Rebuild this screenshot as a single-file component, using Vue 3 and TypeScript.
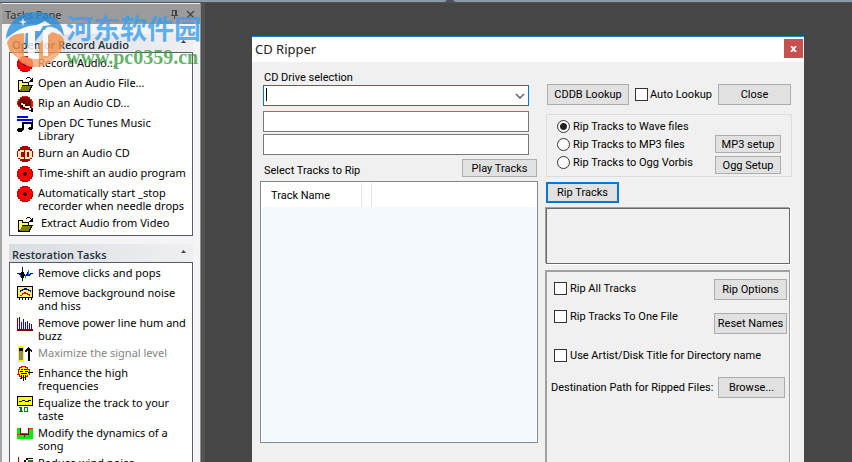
<script setup lang="ts">
import { ref } from 'vue'

type Task = { icon: string; label: string; disabled?: boolean }
type Section = { title: string; tasks: Task[] }

const sections: Section[] = [
  {
    title: 'Open or Record Audio',
    tasks: [
      { icon: 'record', label: 'Record Audio...' },
      { icon: 'folder', label: 'Open an Audio File...' },
      { icon: 'rip', label: 'Rip an Audio CD...' },
      { icon: 'notes', label: 'Open DC Tunes Music Library' },
      { icon: 'cd', label: 'Burn an Audio CD' },
      { icon: 'record', label: 'Time-shift an audio program' },
      { icon: 'record', label: 'Automatically start _stop recorder when needle drops' },
      { icon: 'folder', label: ' Extract Audio from Video' },
    ],
  },
  {
    title: 'Restoration Tasks',
    tasks: [
      { icon: 'click', label: 'Remove clicks and pops' },
      { icon: 'meter', label: 'Remove background noise and hiss' },
      { icon: 'bars', label: 'Remove power line hum and buzz' },
      { icon: 'level', label: 'Maximize the signal level', disabled: true },
      { icon: 'tube', label: 'Enhance the high frequencies' },
      { icon: 'eq', label: 'Equalize the track to your taste' },
      { icon: 'dynamics', label: 'Modify the dynamics of a song' },
      { icon: 'wind', label: 'Reduce wind noise' },
    ],
  },
]

const formats = [
  { value: 'wave', label: 'Rip Tracks to Wave files' },
  { value: 'mp3', label: 'Rip Tracks to MP3 files' },
  { value: 'ogg', label: 'Rip Tracks to Ogg Vorbis' },
]
const format = ref('wave')
const drive = ref('')
const artist = ref('')
const album = ref('')
const autoLookup = ref(false)
const ripAll = ref(false)
const oneFile = ref(false)
const useTitle = ref(false)
</script>

<template>
  <div class="app">
    <div class="frame-edge"><i></i></div>
    <div class="main">
      <aside class="pane">
        <header class="pane-head">
          <span>Tasks Pane</span>
          <button class="pane-btn" type="button" aria-label="Pin">
            <svg width="9" height="9" viewBox="0 0 9 9" shape-rendering="crispEdges">
              <path d="M2 0h5v5h1v1H5v3H4V6H1V5h1zM3 1v4h2V1z" fill="#444" fill-rule="evenodd" />
            </svg>
          </button>
          <button class="pane-btn" type="button" aria-label="Close pane">
            <svg width="9" height="9" viewBox="0 0 9 9"><path d="M1 1l7 7M8 1l-7 7" stroke="#484848" stroke-width="1.4" /></svg>
          </button>
        </header>
        <div class="pane-body">
          <section v-for="s in sections" :key="s.title" class="section">
            <h2 class="section-head">
              <span>{{ s.title }}</span>
              <svg width="5" height="3" viewBox="0 0 5 3"><path d="M0 3L2.5 0 5 3z" fill="#444" /></svg>
            </h2>
            <ul class="tasks">
              <li v-for="t in s.tasks" :key="t.label">
                <button class="task" type="button" :disabled="t.disabled">
                  <svg class="icon" width="16" height="16" viewBox="0 0 16 16" shape-rendering="crispEdges" aria-hidden="true">
                    <g v-if="t.icon === 'record'">
                      <path d="M5 0h6v1h2v2h2v2h1v6h-1v2h-2v2h-2v1H5v-1H3v-2H1v-2H0V5h1V3h2V1h2z" fill="#b00" />
                      <path d="M5 1h6v1h2v2h1v2h1v4h-1v2h-1v2h-2v1H5v-1H3v-2H2v-2H1V6h1V4h1V2h2z" fill="#f00" />
                      <path d="M7 6h2v1h1v2H9v1H7V9H6V7h1z" fill="#400" />
                    </g>
                    <g v-else-if="t.icon === 'folder'">
                      <path d="M9 2h1V1h3v1h1v1h1V2h1v4h-4V5h1V4h1V3h-1V2h-3v1H9z" fill="#000" />
                      <path d="M1 4h5v2h6v3h4v1h-1v2h-1v2h-1v2H1z" fill="#000" />
                      <path d="M2 5h3v2h6v2H5v2H4v2H3v1H2z" fill="#ff6" />
                      <path d="M5 10h9v1h-1v2h-1v2H3v-2h1v-2h1z" fill="#808000" />
                    </g>
                    <g v-else-if="t.icon === 'rip'">
                      <path d="M5 0h6v1h2v2h2v2h1v6h-1v2h-2v1H5v-1H3v-2H1V9H0V5h1V3h2V1h2z" fill="#e02000" />
                      <path d="M5 1h6v1h2v2h1v6h-1v2h-2v1H5v-1H3v-2H2V9H1V6h1V4h1V2h2z" fill="#7a0000" />
                      <path d="M3 7h3v1h2v1h3v1h3v2h2v4h-2v-1h-2v-2H8v-1H6v-1H4V9H3z" fill="#000" />
                      <path d="M4 7h2v1h2v2h5v2h1v2h-2v-2H8v-1H6V9H4z" fill="#fff0c8" />
                    </g>
                    <g v-else-if="t.icon === 'notes'">
                      <path d="M0 0h11v2H0zM0 3h16v2H0z" fill="#00f" />
                      <path d="M5 6h10V5h1v8h-1v1h-3v-1h-1v-1h1v-1h2V8H7v6H6v1H5v1H1v-1H0v-2h1v-1h4z" fill="#000" />
                    </g>
                    <g v-else-if="t.icon === 'cd'">
                      <path d="M5 0h6v1h2v2h2v2h1v6h-1v2h-2v2h-2v1H5v-1H3v-2H1v-2H0V5h1V3h2V1h2z" fill="#a80000" />
                      <path d="M3 4h4v2H4v5h3v2H3v-1H1V5h2zM8 4h5v1h2v7h-2v1H8zM10 6v5h2V6z" fill="#ffe8b0" fill-rule="evenodd" />
                    </g>
                    <g v-else-if="t.icon === 'click'">
                      <path d="M0 7h4v1h1v1H2V8H0zM9 8h1V6h1v3h1V8h1V7h3v1h-2v1h-1v1H9z" fill="#00f" />
                      <path d="M5 1h1v14H5zM4 6h3v2h1v2H7v2H4z" fill="#000" />
                      <path d="M8 9h1v3H8zM11 4h1v5h-1zM3 9h1v2H3z" fill="#088" />
                    </g>
                    <g v-else-if="t.icon === 'meter'">
                      <path d="M0 0h16v12H0zM2 12h1v2H2zM5 12h1v2H5zM8 12h1v2H8zM11 12h1v2h-1zM14 12h1v2h-1z" fill="#000" />
                      <path d="M1 1h14v10H1z" fill="#ffef72" />
                      <path d="M2 6h1V4h2V3h2V2h3v1h2v1h2v2h-1V5h-2V4H6v1H4v1z" fill="#00c" />
                      <path d="M3 9h2V7h2V6h2v1h2v1h2v2h-1V9h-2V8H6v1H5v1H3z" fill="#e00" />
                    </g>
                    <g v-else-if="t.icon === 'bars'">
                      <path d="M0 2h1v11h15v2H0z" fill="#800000" />
                      <path d="M2 1h1v12H2zM4 6h1v7H4zM6 3h1v10H6zM8 6h1v7H8zM10 5h1v8h-1zM12 7h1v6h-1zM14 8h1v5h-1z" fill="#00f" />
                    </g>
                    <g v-else-if="t.icon === 'level'">
                      <path d="M1 0h6v16H1z" fill="#ff0" />
                      <path d="M2 2h4v12H2z" fill="#888" />
                      <path d="M2 2h4v3H2zM11 1h1v1h1v1h1v1h1v2h-1V5h-1v10h-2V5h-1v1H8V4h1V3h1V2h1z" fill="#000" />
                    </g>
                    <g v-else-if="t.icon === 'tube'">
                      <path d="M4 0h5v1h2v2h2v6h-2v2H9v1H4v-1H2V9H0V8h1V3h1V1h2z" fill="#d00" />
                      <path d="M5 1h3v1h2v2h2v5h-2v1H9v1H4v-1H3V8H2V4h1V2h2z" fill="#ff0" />
                      <path d="M4 3h2v1H4zM7 3h3v1H7zM3 5h3v1H3zM8 5h3v1H8zM4 7h6v1H4zM4 9h1v4H3v-1h1zM6 9h1v6H6zM8 9h1v5H8zM11 6h5v1h-5z" fill="#000" />
                    </g>
                    <g v-else-if="t.icon === 'eq'">
                      <path d="M0 0h16v10H0z" fill="#000" />
                      <path d="M1 1h14v8H1z" fill="#ff0" />
                      <path d="M2 5h3V4h3v1h3V4h3v1h-2v1H8V5H5v1H2z" fill="#000" />
                      <path d="M2 11h3v4h1v1H2v-1h1v-3H2zM7 11h4v5H7zM8 12v3h2v-3z" fill="#008000" fill-rule="evenodd" />
                    </g>
                    <g v-else-if="t.icon === 'dynamics'">
                      <path d="M0 2h4v6h7V2h5v11H0z" fill="#0e0" />
                      <path d="M3 2h1v6h7V2h1v7H8v2H7V9H3z" fill="#700" />
                      <path d="M0 8h3v1H0zM4 7h7v1H4zM12 2h4v1h-4z" fill="#f22" />
                    </g>
                    <g v-else>
                      <path d="M1 1h1v14H1z" fill="#a00" />
                      <path d="M9 2h7v1h-5v1H9v2H8v2H7V4h2z" fill="#000" />
                      <path d="M11 4h5v2h-5z" fill="#080" />
                    </g>
                  </svg>
                  <span>{{ t.label }}</span>
                </button>
              </li>
            </ul>
          </section>
        </div>
        <div class="watermark" aria-hidden="true">
          <svg width="60" height="58" viewBox="0 0 60 58">
            <path d="M1 28C2 12 14 1 31 1c16 0 27 10 28 24-6-8-12-10-17-9L27 34h-7l1-15C12 20 5 23 1 28z" fill="#2b8fdc" />
            <path d="M2 31c5-7 11-10 17-11v29C9 46 3 40 2 31zM34 33l13-12c8 2 12 5 12 9-1 11-9 20-21 22l-4-1z" fill="#f6914b" />
            <path d="M8 37c8 8 18 12 28 11 9-1 16-6 20-12-4 13-14 20-26 20-11 0-19-7-22-19z" fill="#f6a66c" />
            <path d="M4 26c10-9 18-11 28-12l8-4 6 4-8 1-3 5h-5v27h-7V22C15 22 9 23 4 26zM38 19h5v26h-5zM18 7l1 3 3 1-3 1-1 3-1-3-3-1 3-1z" fill="#fff" />
          </svg>
          <div class="wm-text">
            <span class="wm-name">河东软件园</span>
            <span class="wm-url">www.pc0359.cn</span>
          </div>
        </div>
      </aside>

      <main class="workspace">
        <div class="dialog" role="dialog" aria-labelledby="dlg-title">
          <header class="title-bar">
            <h1 id="dlg-title">CD Ripper</h1>
            <button class="x-btn" type="button" aria-label="Close window">
              <svg width="7" height="6" viewBox="0 0 7 6"><path d="M1 0l5 6M6 0L1 6" stroke="#fff" stroke-width="1.8" /></svg>
            </button>
          </header>
          <div class="dialog-body">
            <div class="left">
              <div class="fields">
                <label for="drive">CD Drive selection</label>
                <div class="combo">
                  <select id="drive" v-model="drive"><option value=""></option></select>
                  <i class="caret"></i>
                  <svg width="10" height="6" viewBox="0 0 10 6"><path d="M1 1l4 4 4-4" fill="none" stroke="#555" stroke-width="1.3" /></svg>
                </div>
                <input v-model="artist" class="field first" type="text" aria-label="Artist" />
                <input v-model="album" class="field" type="text" aria-label="Album" />
              </div>
              <div class="list-head">
                <span>Select Tracks to Rip</span>
                <button class="btn small play" type="button">Play Tracks</button>
              </div>
              <div class="list">
                <table>
                  <thead><tr><th class="name">Track Name</th><th class="narrow"></th><th></th></tr></thead>
                </table>
              </div>
            </div>

            <div class="right">
              <div class="lookup">
                <button class="btn cddb" type="button">CDDB Lookup</button>
                <label class="check tight"><input v-model="autoLookup" type="checkbox" />Auto Lookup</label>
                <button class="btn close" type="button">Close</button>
              </div>
              <div class="group">
                <div class="radios">
                  <label v-for="f in formats" :key="f.value" class="check">
                    <input v-model="format" type="radio" name="format" :value="f.value" />{{ f.label }}
                  </label>
                </div>
                <div class="setups">
                  <button class="btn small" type="button">MP3 setup</button>
                  <button class="btn small" type="button">Ogg Setup</button>
                </div>
              </div>
              <button class="btn primary" type="button">Rip Tracks</button>
              <div class="status"></div>
              <div class="options">
                <div class="opt-top">
                  <div class="opt-checks">
                    <label class="check"><input v-model="ripAll" type="checkbox" />Rip All Tracks</label>
                    <label class="check"><input v-model="oneFile" type="checkbox" />Rip Tracks To One File</label>
                  </div>
                  <div class="opt-btns">
                    <button class="btn" type="button">Rip Options</button>
                    <button class="btn" type="button">Reset Names</button>
                  </div>
                </div>
                <label class="check title-check"><input v-model="useTitle" type="checkbox" />Use Artist/Disk Title for Directory name</label>
                <div class="dest">
                  <span>Destination Path for Ripped Files:</span>
                  <button class="btn browse" type="button">Browse...</button>
                </div>
              </div>
            </div>
          </div>
        </div>
      </main>
    </div>
  </div>
</template>

<style>
body { margin: 0; overflow: hidden; }
</style>

<style scoped>
* { box-sizing: border-box; }
button, input, select { font: inherit; color: inherit; margin: 0; padding: 0; border-radius: 0; }
svg { display: block; flex: none; }
.app {
  height: 100vh; display: flex; flex-direction: column; overflow: hidden;
  background: #464646; color: #000; font: 11px/13px "Noto Sans", "Open Sans", sans-serif;
}
.frame-edge { flex: none; height: 3px; background: #8f99a6; border-bottom: 1px solid #4c535e; display: flex; justify-content: center; }
.frame-edge i { width: 10px; height: 3px; margin-left: 48px; border-radius: 5px 5px 0 0; background: #4c535e; }
.main { flex: 1; min-height: 0; display: flex; }

.pane {
  position: relative; flex: none; width: 205px; overflow: hidden;
  background: #f4f4f4; border-left: 2px solid #a5a5a5; border-right: 4px solid #535353;
  box-shadow: inset -1px 0 #8c8c8c;
}
.pane-head {
  display: flex; align-items: center; height: 21px; gap: 7px; padding: 0 5px 0 3px; margin-right: 1px;
  background: #9b9b9b; border-top: 1px solid #eee; color: #333;
}
.pane-head span { flex: 1; }
.pane-btn { width: 9px; height: 9px; border: 0; background: none; }
.pane-body { padding: 10px 8px 0 7px; display: flex; flex-direction: column; gap: 8px; }
.section-head {
  display: flex; align-items: center; justify-content: space-between; height: 18px; margin: 0; padding: 3px 7px 0 3px;
  font: 600 11px/13px "Open Sans", "Noto Sans", sans-serif; color: #26303a;
  background: linear-gradient(90deg, #d9dde1, #efeff1);
}
.section-head svg { margin-bottom: 6px; }
.tasks { list-style: none; margin: 0; padding: 3px 3px 3px 7px; background: #fff; border: 1px solid #555b68; display: flex; flex-direction: column; gap: 4px; }
.tasks li { display: block; }
.task { display: flex; gap: 5px; width: 100%; min-height: 16px; align-items: flex-start; border: 0; background: none; text-align: left; }
.task span { white-space: pre-wrap; }
.task:disabled { color: #848484; }

.watermark { position: absolute; left: 3px; top: 8px; display: flex; gap: 1px; opacity: .8; pointer-events: none; }
.wm-text { display: flex; flex-direction: column; white-space: nowrap; }
.wm-name { font: bold 27px/34px "Noto Sans CJK SC", sans-serif; color: #3a9ff0; }
.wm-url { font: bold 20px/25px "Liberation Serif", serif; color: #3f9f46; }

.workspace { flex: 1; min-width: 0; padding: 33px 48px 0 47px; display: flex; }
.dialog { flex: 1; min-width: 0; display: flex; flex-direction: column; background: #f0f0f0; border-top: 1px solid #1c7fd6; font: 11px/13px Roboto, "Liberation Sans", sans-serif; }
.title-bar { flex: none; display: flex; justify-content: space-between; align-items: flex-start; height: 25px; padding: 2px 1px 0 3px; background: #fff; }
.title-bar h1 { margin: 0; font: 13px/20px "Noto Sans", sans-serif; color: #222; }
.x-btn { width: 19px; height: 19px; border: 0; background: #c75050; display: flex; align-items: center; justify-content: center; }
.dialog-body { flex: 1; display: grid; grid-template-columns: minmax(0, 1fr) 247px; gap: 7px; padding: 0 12px 0 8px; }

.left { padding-top: 9px; }
.fields { display: flex; flex-direction: column; padding: 0 9px 0 3px; gap: 2px; }
.fields label { padding-left: 1px; margin-bottom: -1px; }
.combo { position: relative; display: flex; }
.combo select { appearance: none; width: 100%; height: 21px; border: 1px solid #0078d7; background: #fff; outline: none; }
.combo svg { position: absolute; right: 4px; top: 8px; pointer-events: none; }
.caret { position: absolute; left: 3px; top: 3px; width: 1px; height: 13px; background: #000; }
.field { width: 100%; height: 21px; border: 1px solid #7a7a7a; background: #fff; padding: 0 3px; }
.field.first { margin-top: 3px; }
.list-head { display: flex; justify-content: space-between; align-items: flex-end; padding: 0 1px 0 4px; margin: 4px 0; }
.btn { height: 21px; border: 1px solid #adadad; background: #e1e1e1; white-space: nowrap; }
.btn.small { height: 18px; }
.play { width: 75px; }
.list { height: 262px; border: 1px solid #828790; padding: 1px; background: #f4f9fe; box-shadow: inset 0 0 0 1px #fff; }
.list table { width: 100%; border-collapse: separate; border-spacing: 0; table-layout: fixed; background: #fff; }
.list th { height: 24px; padding: 0 0 0 9px; font-weight: normal; text-align: left; vertical-align: middle; border-right: 1px solid #e5e5e5; }
.list th:last-child { border: 0; }
.list .name { width: 100px; }
.list .narrow { width: 10px; padding: 0; }

.right { display: flex; flex-direction: column; padding-top: 22px; min-width: 0; }
.lookup { display: flex; align-items: center; padding: 0 1px 0 2px; }
.cddb { width: 82px; margin-right: 6px; }
.close { width: 73px; margin-left: auto; }
.check { display: flex; align-items: center; gap: 3px; height: 13px; white-space: nowrap; }
.check.tight { gap: 2px; }
.check input { appearance: none; flex: none; width: 13px; height: 13px; border: 1px solid #333; background: #fff; }
.check input[type="radio"] { border-radius: 50%; }
.check input[type="radio"]:checked { background: radial-gradient(circle, #222 0 3px, #fff 4px); }
.check input[type="checkbox"]:checked { background: #333; box-shadow: inset 0 0 0 2px #fff; }
.group { display: flex; justify-content: space-between; margin: 9px 0 5px 1px; height: 63px; border: 1px solid #dcdcdc; padding: 5px 10px 0; }
.radios { display: flex; flex-direction: column; gap: 5px; }
.setups { display: flex; flex-direction: column; gap: 3px; width: 66px; padding-top: 15px; }
.primary { width: 73px; margin-left: 1px; border: 2px solid #0078d7; }
.status { height: 56px; margin: 5px 2px 6px 1px; border: 1px solid #696969; box-shadow: -1px -1px #a0a0a0, 1px 1px #fff; }
.options { flex: 1; margin-right: 2px; border: solid #a0a0a0; border-width: 2px 1px 0 2px; box-shadow: 1px 0 #fff; padding: 7px 2px 0 4px; }
.opt-top { display: flex; justify-content: space-between; }
.opt-checks { display: flex; flex-direction: column; gap: 15px; padding: 3px 0 0 3px; }
.opt-btns { display: flex; flex-direction: column; gap: 13px; width: 73px; }
.title-check { margin: 15px 0 0 3px; }
.dest { display: flex; justify-content: space-between; align-items: center; padding-right: 2px; margin-top: 15px; white-space: nowrap; }
.browse { width: 67px; }
</style>
